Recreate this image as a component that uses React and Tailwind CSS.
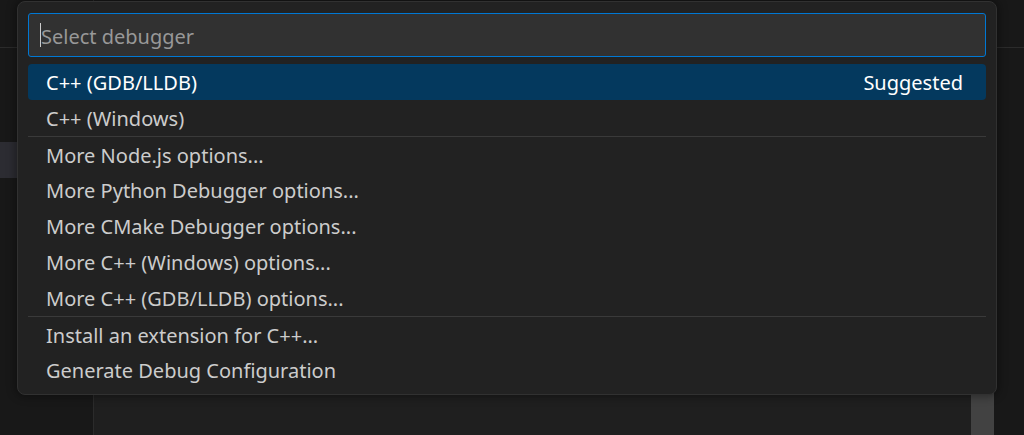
import React from 'react';

const groups = [
  [
    { label: 'C++ (GDB/LLDB)', hint: 'Suggested', active: true },
    { label: 'C++ (Windows)' },
  ],
  [
    { label: 'More Node.js options...' },
    { label: 'More Python Debugger options...' },
    { label: 'More CMake Debugger options...' },
    { label: 'More C++ (Windows) options...' },
    { label: 'More C++ (GDB/LLDB) options...' },
  ],
  [
    { label: 'Install an extension for C++...' },
    { label: 'Generate Debug Configuration' },
  ],
];

const font = { fontFamily: '"Noto Sans", "Open Sans", sans-serif' };

function Row({ item, first }) {
  return (
    <div
      className={`flex h-[36px] items-center justify-between rounded-[4px] pl-[18px] pr-[23px] ${
        item.active ? 'bg-[#04395e] text-white' : 'text-[#cccccc]'
      } ${first ? 'rounded-none border-t border-[#3a3a3a]' : ''}`}
    >
      <span className="pt-[2px]">{item.label}</span>
      {item.hint && <span className="pt-[2px]">{item.hint}</span>}
    </div>
  );
}

export default function App() {
  return (
    <div className="relative h-[435px] w-[1024px] overflow-hidden bg-[#1f1f1f]" style={font}>
      {/* workbench behind the picker */}
      <div className="flex h-full">
        <div className="flex w-[94px] flex-col border-r border-[#2b2b2b] bg-[#181818]">
          <div className="h-[48px] border-b border-[#2b2b2b]" />
          <div className="mt-[94px] h-[36px] bg-[#2c2c32]" />
        </div>
        <div className="flex flex-1 flex-col">
          <div className="h-[48px] border-b border-[#2b2b2b] bg-[#181818]" />
          <div className="flex flex-1">
            <div className="flex-1 bg-[#1f1f1f]" />
            <div className="w-[23px] bg-[#424242]" />
            <div className="w-[30px] bg-[#181818]" />
          </div>
        </div>
      </div>

      {/* quick pick */}
      <div className="absolute left-[17px] top-[1px] w-[980px] rounded-[8px] border border-[#313131] bg-[#222222] px-[10px] pb-[6px] pt-[11px] shadow-[0_0_8px_2px_rgba(0,0,0,0.36)]">
        <div className="flex h-[44px] items-center rounded-[3px] border-[1.5px] border-[#0078d4] bg-[#313131] pl-[11px]">
          <span className="h-[24px] w-px bg-[#cccccc]" />
          <span className="pt-[3px] text-[20px] text-[#989898]">Select debugger</span>
        </div>
        <div className="mt-[7px] text-[20px]">
          {groups.map((g, gi) => (
            <div key={gi}>
              {g.map((item, i) => (
                <Row key={item.label} item={item} first={gi > 0 && i === 0} />
              ))}
            </div>
          ))}
        </div>
      </div>
    </div>
  );
}
